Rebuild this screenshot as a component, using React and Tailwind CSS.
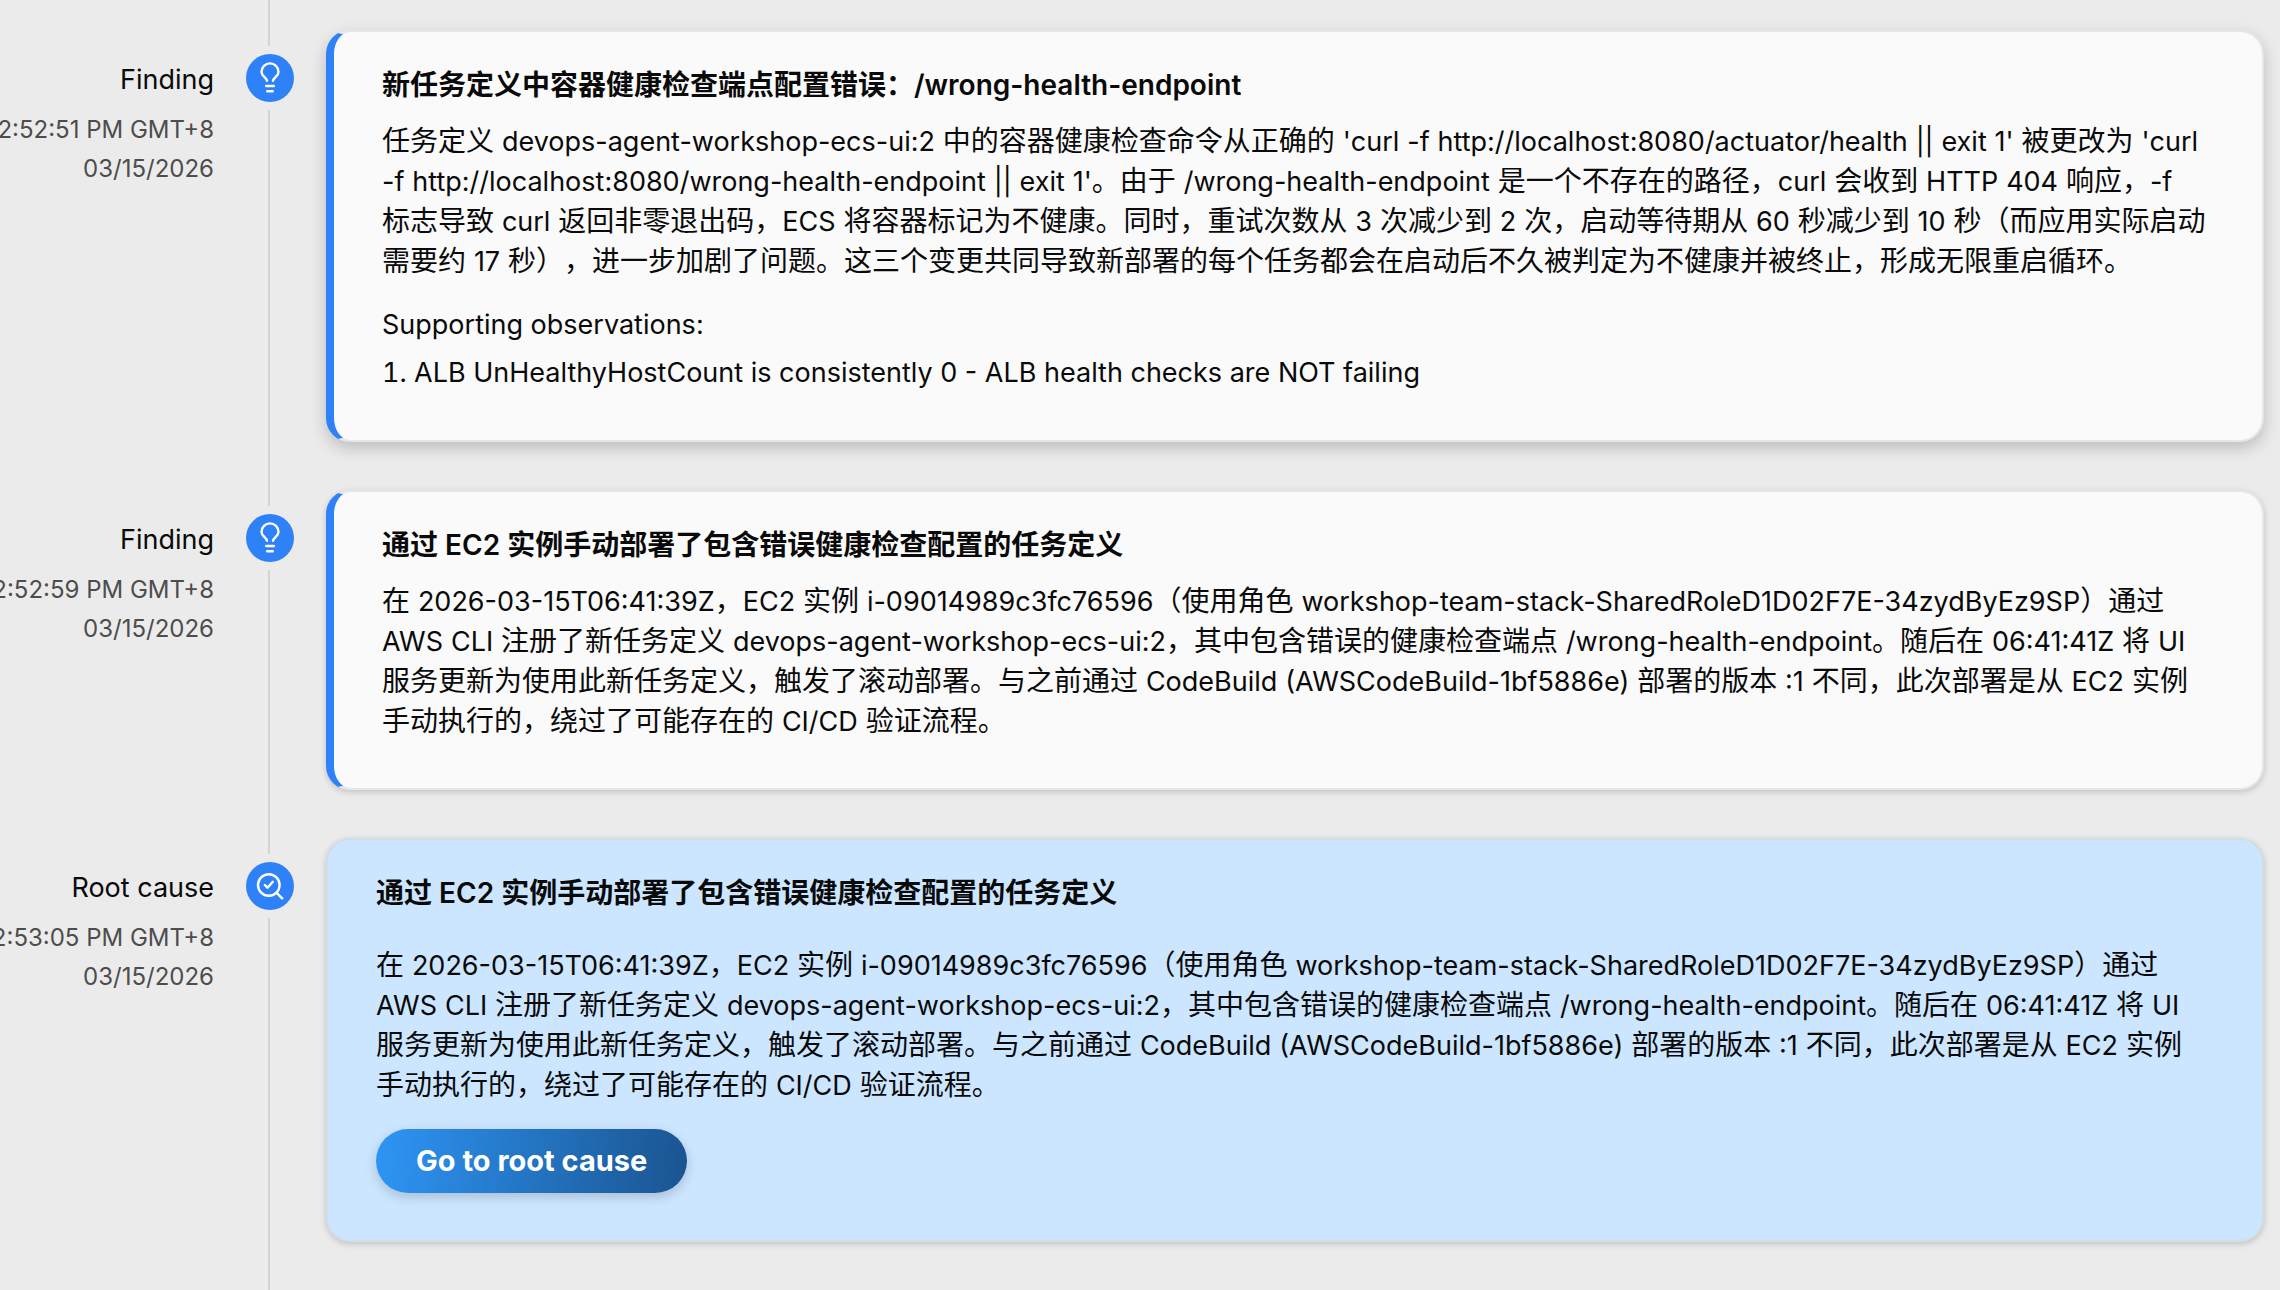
import React from "react";

const rootCauseText = `在 2026-03-15T06:41:39Z，EC2 实例 i-09014989c3fc76596（使用角色 workshop-team-stack-SharedRoleD1D02F7E-34zydByEz9SP）通过
AWS CLI 注册了新任务定义 devops-agent-workshop-ecs-ui:2，其中包含错误的健康检查端点 /wrong-health-endpoint。随后在 06:41:41Z 将 UI
服务更新为使用此新任务定义，触发了滚动部署。与之前通过 CodeBuild (AWSCodeBuild-1bf5886e) 部署的版本 :1 不同，此次部署是从 EC2 实例
手动执行的，绕过了可能存在的 CI/CD 验证流程。`;

const healthCheckText = `任务定义 devops-agent-workshop-ecs-ui:2 中的容器健康检查命令从正确的 'curl -f http://localhost:8080/actuator/health || exit 1' 被更改为 'curl
-f http://localhost:8080/wrong-health-endpoint || exit 1'。由于 /wrong-health-endpoint 是一个不存在的路径，curl 会收到 HTTP 404 响应，-f
标志导致 curl 返回非零退出码，ECS 将容器标记为不健康。同时，重试次数从 3 次减少到 2 次，启动等待期从 60 秒减少到 10 秒（而应用实际启动
需要约 17 秒），进一步加剧了问题。这三个变更共同导致新部署的每个任务都会在启动后不久被判定为不健康并被终止，形成无限重启循环。`;

const events = [
  {
    id: 1,
    type: "finding",
    label: "Finding",
    time: "2:52:51 PM GMT+8",
    date: "03/15/2026",
    title: "新任务定义中容器健康检查端点配置错误：/wrong-health-endpoint",
    text: healthCheckText,
    observations: [
      "ALB UnHealthyHostCount is consistently 0 - ALB health checks are NOT failing",
    ],
    shadow: "shadow-[0_6px_16px_rgba(0,0,0,0.2)]",
  },
  {
    id: 2,
    type: "finding",
    label: "Finding",
    time: "2:52:59 PM GMT+8",
    date: "03/15/2026",
    title: "通过 EC2 实例手动部署了包含错误健康检查配置的任务定义",
    text: rootCauseText,
    shadow: "shadow-[0_2px_6px_rgba(0,0,0,0.18)]",
  },
  {
    id: 3,
    type: "root",
    label: "Root cause",
    time: "2:53:05 PM GMT+8",
    date: "03/15/2026",
    title: "通过 EC2 实例手动部署了包含错误健康检查配置的任务定义",
    text: rootCauseText,
  },
];

const BulbIcon = () => (
  <svg
    className="w-8 h-8"
    viewBox="0 0 32 32"
    fill="none"
    stroke="currentColor"
    strokeWidth="2.4"
    strokeLinecap="round"
    aria-hidden="true"
  >
    <path d="M13 18.8C12.400 15.600 7.500 14.200 7.500 9.900a8.500 8.500 0 0 1 17 0c0 4.300-4.900 5.700-5.500 8.900" />
    <path d="M12.200 24h7.600M13.200 29.200h5.600" />
  </svg>
);

const SearchCheckIcon = () => (
  <svg
    className="w-8 h-8"
    viewBox="0 0 32 32"
    fill="none"
    stroke="currentColor"
    strokeWidth="2.4"
    strokeLinecap="round"
    strokeLinejoin="round"
    aria-hidden="true"
  >
    <circle cx="14.8" cy="15" r="10.8" />
    <path d="m22.6 22.8 5.600 5.600M10.800 15l2.700 2.700 5.300-5.900" />
  </svg>
);

// Latin words are set one pixel smaller so they sit evenly beside the Chinese
const MixedText = ({ text }) =>
  text.split("\n").map((line, row) => (
    <span key={row} className="block">
      {line.split(/([\x21-\x7e]+)/).map((part, i) =>
        i % 2 === 1 ? (
          <span key={i} className="text-[27px] leading-none">
            {part}
          </span>
        ) : (
          part
        )
      )}
    </span>
  ));

const TimelineCard = ({ event }) => {
  if (event.type === "root") {
    return (
      <article className="flex-1 min-w-0 rounded-3xl border-2 border-[#d3dde6] bg-[#cce6ff] px-12 pt-[33px] pb-[47px] shadow-[0_2px_6px_rgba(0,0,0,0.18)]">
        <h3 className="font-semibold">{event.title}</h3>
        <p className="mt-8">
          <MixedText text={event.text} />
        </p>
        <button
          type="button"
          className="mt-6 block h-16 rounded-full bg-linear-[95deg,#2e95f5,#1a5490] px-10 text-[29px] font-bold text-white shadow-[0_4px_12px_rgba(0,0,0,0.18)]"
        >
          Go to root cause
        </button>
      </article>
    );
  }

  return (
    <article
      className={`flex-1 min-w-0 rounded-3xl border-2 border-l-8 border-[#e6e6e6] border-l-[#2f81f7] bg-[#fafafa] px-12 pt-[33px] pb-[47px] ${event.shadow}`}
    >
      <h3 className="font-semibold">{event.title}</h3>
      <p className="mt-4">
        <MixedText text={event.text} />
      </p>
      {event.observations && (
        <div className="text-[27px]">
          <p className="mt-6">Supporting observations:</p>
          <ol className="mt-2 list-inside list-decimal">
            {event.observations.map((item) => (
              <li key={item}>{item}</li>
            ))}
          </ol>
        </div>
      )}
    </article>
  );
};

const TimelineRow = ({ event }) => (
  <li className="flex gap-8">
    <div className="flex w-[214px] shrink-0 flex-col items-end pt-7 whitespace-nowrap">
      <span className="text-[27px] leading-[44px]">{event.label}</span>
      <span className="mt-2 text-2xl leading-[39px] text-[#4d4d4d]">
        {event.time}
      </span>
      <span className="text-2xl leading-[39px] text-[#4d4d4d]">
        {event.date}
      </span>
    </div>

    {/* the line runs through the gap down to the next row */}
    <div className="-mb-12 flex w-12 shrink-0 flex-col gap-2">
      <span className="ml-[22px] h-4 w-0.5 bg-[#d4d4d4]" />
      <span className="flex h-12 w-12 items-center justify-center rounded-full bg-[#2f81f7] text-white">
        {event.type === "root" ? <SearchCheckIcon /> : <BulbIcon />}
      </span>
      <span className="ml-[22px] w-0.5 flex-1 bg-[#d4d4d4]" />
    </div>

    <TimelineCard event={event} />
  </li>
);

const App = () => (
  <main className="min-h-screen overflow-hidden bg-[#ebebeb] pr-4 font-['Inter','Noto_Sans_CJK_SC',sans-serif] text-[28px] leading-10 text-[#0a0a0a] [text-spacing-trim:space-all]">
    <div className="ml-[268px] h-[30px] w-0.5 bg-[#d4d4d4]" />
    <ol className="flex flex-col gap-12 pb-12">
      {events.map((event) => (
        <TimelineRow key={event.id} event={event} />
      ))}
    </ol>
  </main>
);

export default App;
